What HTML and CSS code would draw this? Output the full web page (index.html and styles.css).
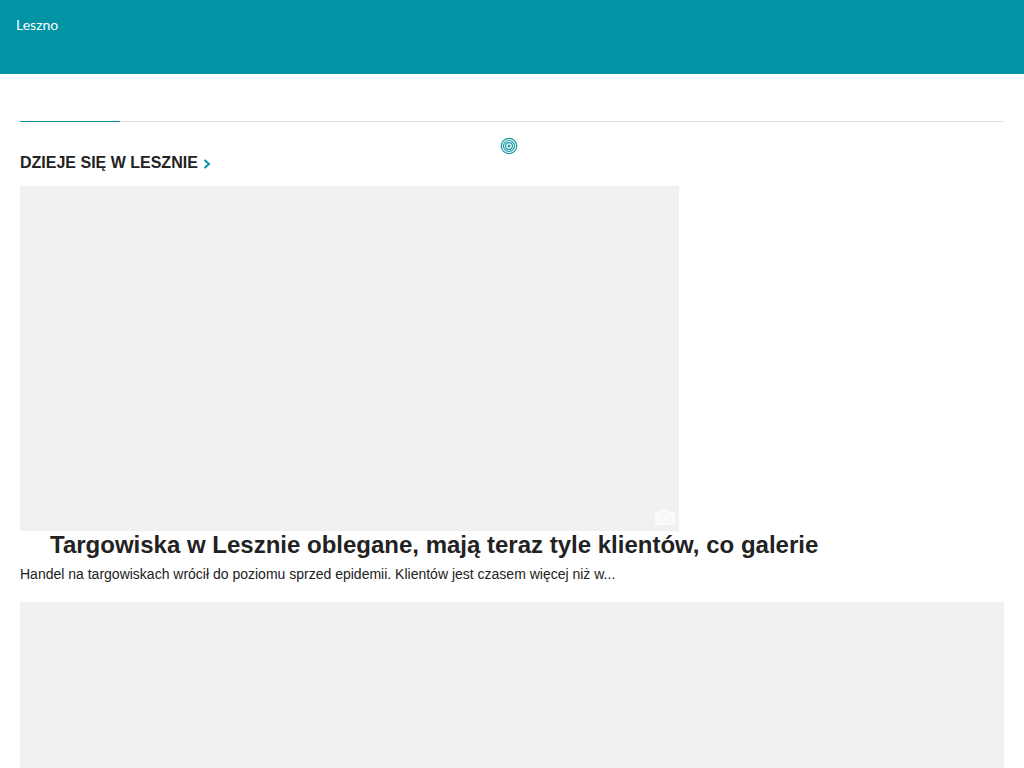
FILE: index.html
```html
<!DOCTYPE html>
<html lang="pl">
<head>
    <meta charset="UTF-8">
    <meta name="viewport" content="width=device-width, initial-scale=1.0">
    <title>Leszno</title>
    <link rel="stylesheet" href="styles.css">
</head>
<body>
    <header class="header">
        <a class="city" href="#">Leszno</a>
    </header>
    <main class="content">
        <div class="tabs"><div class="tabs-active"></div></div>
        <section class="news">
            <svg class="loader" viewBox="0 0 18 18" aria-hidden="true">
                <circle cx="9" cy="9" r="7.7"/>
                <circle cx="9" cy="9" r="5.5"/>
                <circle cx="9" cy="9" r="3.4"/>
                <circle class="loader-dot" cx="9" cy="9" r="1.4"/>
            </svg>
            <h2 class="section-title">
                <a href="#">DZIEJE SIĘ W LESZNIE
                    <svg class="arrow" viewBox="0 0 8 10" aria-hidden="true"><path d="M1.5 1L6 5L1.5 9"/></svg>
                </a>
            </h2>
            <article class="article">
                <a class="photo" href="#" aria-label="Galeria">
                    <svg class="camera" viewBox="0 0 20 16" aria-hidden="true">
                        <path class="camera-body" d="M2 2.5H5.5L7 0.5H13L14.5 2.5H18Q20 2.5 20 4.5V14Q20 16 18 16H2Q0 16 0 14V4.5Q0 2.5 2 2.5Z"/>
                        <circle class="camera-ring" cx="10" cy="9" r="4.5"/>
                        <path class="camera-ring" d="M7.8 9A2.2 2.2 0 0 1 10 6.8"/>
                    </svg>
                </a>
                <h3 class="article-title"><a href="#">Targowiska w Lesznie oblegane, mają teraz tyle klientów, co galerie</a></h3>
                <p class="lead">Handel na targowiskach wrócił do poziomu sprzed epidemii. Klientów jest czasem więcej niż w...</p>
            </article>
            <article class="article">
                <a class="photo photo-wide" href="#" aria-label="Artykuł"></a>
            </article>
        </section>
    </main>
</body>
</html>
```
FILE: styles.css
```css
* {
    box-sizing: border-box;
}
body {
    margin: 0;
    background: #fff;
    color: #222;
    font-family: Helvetica, "Liberation Sans", Arial, sans-serif;
}
a {
    color: inherit;
    text-decoration: none;
}
.header {
    min-height: 74px;
    padding: 16px;
    background: #0094a5;
    color: #fff;
    font: 14px/18px Lato, sans-serif;
}
.content {
    padding: 47px 20px 0;
}
.tabs {
    height: 1px;
    background: #dee2e2;
}
.tabs-active {
    width: 100px;
    height: 1px;
    background: #0094a5;
}
.news {
    position: relative;
    padding-top: 30px;
}
.loader {
    position: absolute;
    top: 15px;
    left: calc(50% - 12px);
    width: 18px;
    height: 18px;
    fill: none;
    stroke: #1598a6;
    stroke-width: 1.2;
}
.loader-dot {
    fill: #1598a6;
    stroke: none;
}
.section-title {
    margin: 0 0 12px;
    font-size: 16px;
    line-height: 22px;
}
.arrow {
    width: 8px;
    height: 10px;
    margin-left: 1px;
    vertical-align: -1px;
    fill: none;
    stroke: #0094a5;
    stroke-width: 2;
}
.article {
    margin-bottom: 18px;
}
.photo {
    display: flex;
    align-items: flex-end;
    justify-content: flex-end;
    width: 67%;
    aspect-ratio: 659 / 345;
    padding: 6px 4px;
    background: #f1f1f1;
}
.photo-wide {
    width: 100%;
}
.camera {
    width: 20px;
    height: 16px;
}
.camera-body {
    fill: #fafafa;
}
.camera-ring {
    fill: none;
    stroke: #f1f1f1;
}
.article-title {
    margin: 0 0 6px;
    padding-left: 30px;
    font-size: 24px;
    line-height: 28px;
}
.lead {
    margin: 0;
    font-size: 14px;
    line-height: 19px;
}
```
